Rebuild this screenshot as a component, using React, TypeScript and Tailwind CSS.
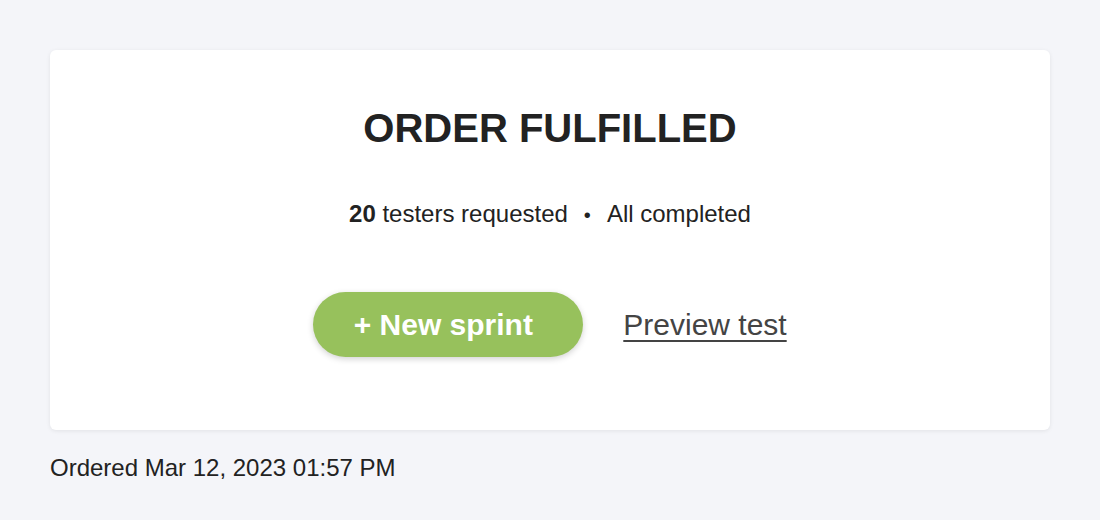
import React from 'react';

export default function App() {
  return (
    <div className="min-h-screen w-full bg-[#f4f5f9] px-[50px] pt-[50px] font-['Liberation_Sans',Arial,sans-serif] text-[#222]">
      <div className="flex h-[380px] flex-col items-center rounded-md bg-white pt-[58px] shadow-[0_1px_4px_rgba(0,0,0,0.08)]">
        <h1 className="text-[40px] font-bold leading-[40px] text-[#222]">ORDER FULFILLED</h1>
        <p className="mt-[52px] text-[24px] leading-[28px] text-[#222]">
          <span className="font-bold">20</span> testers requested
          <span className="mx-[16px] text-[20px]">•</span>
          All completed
        </p>
        <div className="mt-[63px] flex items-center gap-[40px]">
          <button className="h-[65px] w-[270px] rounded-full bg-[#97c15c] pr-[10px] text-[30px] font-bold text-white shadow-[0_2px_6px_rgba(0,0,0,0.18)]">
            + New sprint
          </button>
          <a href="#" className="text-[30px] text-[#444] underline decoration-2 underline-offset-[5px]">
            Preview test
          </a>
        </div>
      </div>
      <p className="mt-[24px] text-[24px] leading-[28px] text-[#222]">Ordered Mar 12, 2023 01:57 PM</p>
    </div>
  );
}
